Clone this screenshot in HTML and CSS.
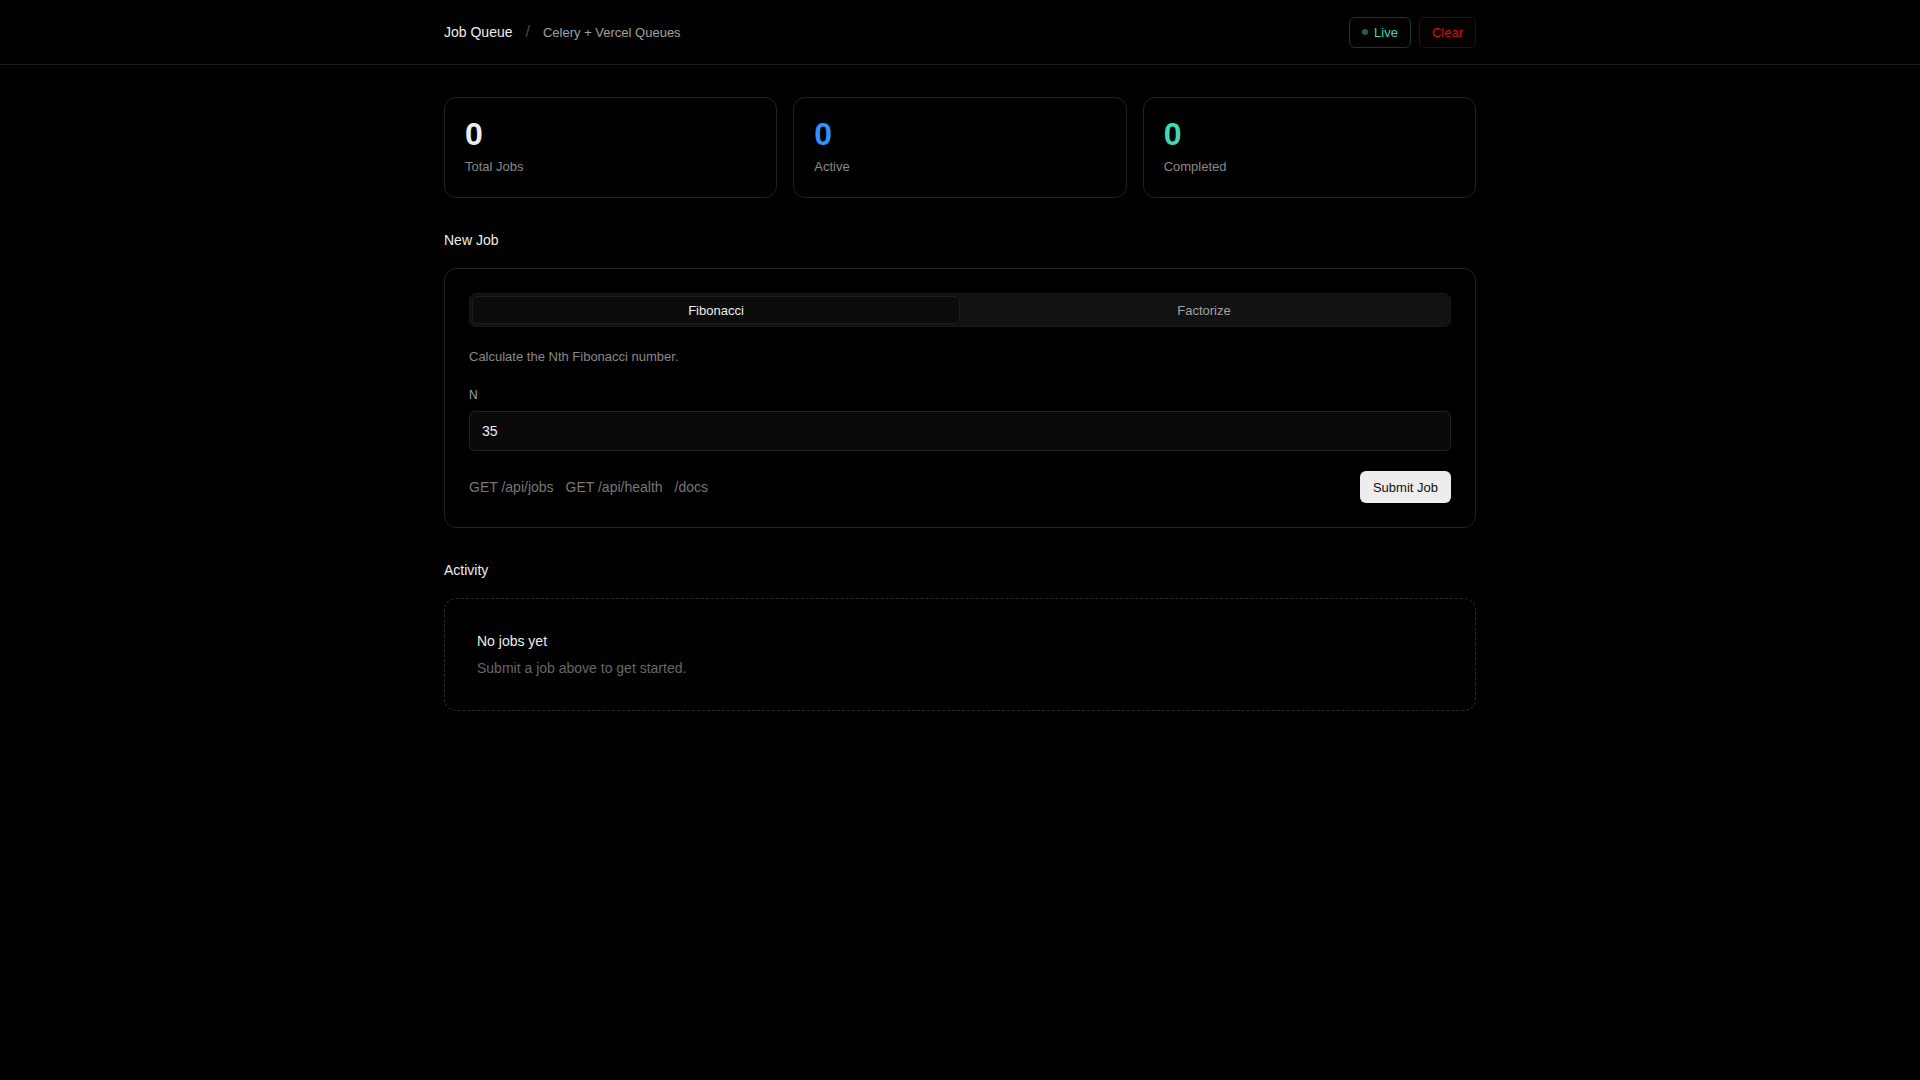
FILE: index.html
```html
<!DOCTYPE html>
<html lang="en">
<head>
<meta charset="utf-8">
<title>Job Queue</title>
<link rel="stylesheet" href="styles.css">
</head>
<body>
<header class="topbar">
  <div class="topbar-inner">
    <div class="brand">
      <span class="brand-title">Job Queue</span>
      <span class="brand-sep">/</span>
      <span class="brand-sub">Celery + Vercel Queues</span>
    </div>
    <div class="actions">
      <button class="btn-live"><span class="live-dot"></span>Live</button>
      <button class="btn-clear">Clear</button>
    </div>
  </div>
</header>

<main class="container">
  <section class="stats">
    <div class="stat-card">
      <div class="stat-num">0</div>
      <div class="stat-label">Total Jobs</div>
    </div>
    <div class="stat-card">
      <div class="stat-num stat-blue">0</div>
      <div class="stat-label">Active</div>
    </div>
    <div class="stat-card">
      <div class="stat-num stat-teal">0</div>
      <div class="stat-label">Completed</div>
    </div>
  </section>

  <h2 class="section-title">New Job</h2>
  <section class="form-card">
    <div class="tabs">
      <button class="tab tab-active">Fibonacci</button>
      <button class="tab">Factorize</button>
    </div>
    <p class="desc">Calculate the Nth Fibonacci number.</p>
    <div class="field">
      <label class="field-label" for="n">N</label>
      <input class="field-input" id="n" type="text" value="35">
    </div>
    <div class="form-footer">
      <div class="links">
        <span class="link">GET /api/jobs</span>
        <span class="link">GET /api/health</span>
        <span class="link">/docs</span>
      </div>
      <button class="btn-submit">Submit Job</button>
    </div>
  </section>

  <h2 class="section-title">Activity</h2>
  <section class="empty">
    <div class="empty-title">No jobs yet</div>
    <div class="empty-sub">Submit a job above to get started.</div>
  </section>
</main>
</body>
</html>
```

FILE: styles.css
```css
* { box-sizing: border-box; }

html, body {
  margin: 0;
  padding: 0;
  background: #000;
  color: #ededed;
  font-family: "Liberation Sans", Arial, sans-serif;
}

button, input {
  font-family: inherit;
}

.topbar {
  border-bottom: 1px solid #1f1f1f;
}

.topbar-inner {
  width: 1032px;
  margin: 0 auto;
  height: 64px;
  display: flex;
  align-items: center;
  justify-content: space-between;
}

.brand {
  display: flex;
  align-items: center;
  gap: 13px;
}

.brand-title {
  font-size: 14px;
  color: #ededed;
}

.brand-sep {
  font-size: 16px;
  color: #4a4a4a;
}

.brand-sub {
  font-size: 13px;
  color: #a1a1a1;
}

.actions {
  display: flex;
  gap: 8px;
}

.btn-live,
.btn-clear {
  height: 31px;
  padding: 0 12px;
  border-radius: 6px;
  background: transparent;
  font-size: 13px;
  display: flex;
  align-items: center;
  cursor: pointer;
}

.btn-live {
  border: 1px solid #123b31;
  color: #3fd9b4;
  gap: 6px;
}

.live-dot {
  width: 6px;
  height: 6px;
  border-radius: 50%;
  background: #24604f;
}

.btn-clear {
  border: 1px solid #3a0808;
  color: #e5080e;
}

.container {
  width: 1032px;
  margin: 0 auto;
  padding-top: 32px;
}

.stats {
  display: grid;
  grid-template-columns: repeat(3, 1fr);
  gap: 16px;
}

.stat-card {
  border: 1px solid #222;
  border-radius: 12px;
  padding: 20px;
}

.stat-num {
  font-size: 32px;
  font-weight: 700;
  line-height: 1;
  color: #ededed;
}

.stat-blue { color: #3291ff; }
.stat-teal { color: #3fd9b4; }

.stat-label {
  margin-top: 7px;
  font-size: 13px;
  line-height: 20px;
  color: #888;
}

.section-title {
  margin: 32px 0 18px;
  font-size: 14px;
  line-height: 20px;
  font-weight: 400;
  color: #ededed;
}

.form-card {
  border: 1px solid #222;
  border-radius: 12px;
  padding: 24px;
}

.tabs {
  display: grid;
  grid-template-columns: 1fr 1fr;
  height: 34px;
  padding: 2px;
  background: #121212;
  border: 1px solid #181818;
  border-radius: 7px;
}

.tab {
  border: 1px solid transparent;
  background: transparent;
  border-radius: 5px;
  font-size: 13px;
  color: #a1a1a1;
  cursor: pointer;
}

.tab-active {
  background: #0b0b0b;
  border-color: #1d1d1d;
  color: #ededed;
}

.desc {
  margin: 20px 0 0;
  font-size: 13px;
  line-height: 20px;
  color: #888;
}

.field {
  margin-top: 20px;
  display: flex;
  flex-direction: column;
}

.field-label {
  font-size: 12px;
  line-height: 16px;
  color: #a1a1a1;
  margin-bottom: 8px;
}

.field-input {
  height: 40px;
  padding: 0 12px;
  background: #0a0a0a;
  border: 1px solid #222;
  border-radius: 6px;
  color: #ededed;
  font-size: 14px;
  outline: none;
}

.form-footer {
  margin-top: 20px;
  display: flex;
  align-items: center;
  justify-content: space-between;
}

.links {
  display: flex;
  gap: 12px;
}

.link {
  font-size: 14px;
  color: #777;
}

.btn-submit {
  height: 32px;
  padding: 0 13px;
  border: none;
  border-radius: 6px;
  background: #ededed;
  color: #111;
  font-size: 13px;
  cursor: pointer;
}

.empty {
  border: 1px dashed #2a2a2a;
  border-radius: 12px;
  padding: 32px;
}

.empty-title {
  font-size: 14px;
  line-height: 20px;
  color: #ededed;
}

.empty-sub {
  margin-top: 7px;
  font-size: 14px;
  line-height: 20px;
  color: #666;
}
```
